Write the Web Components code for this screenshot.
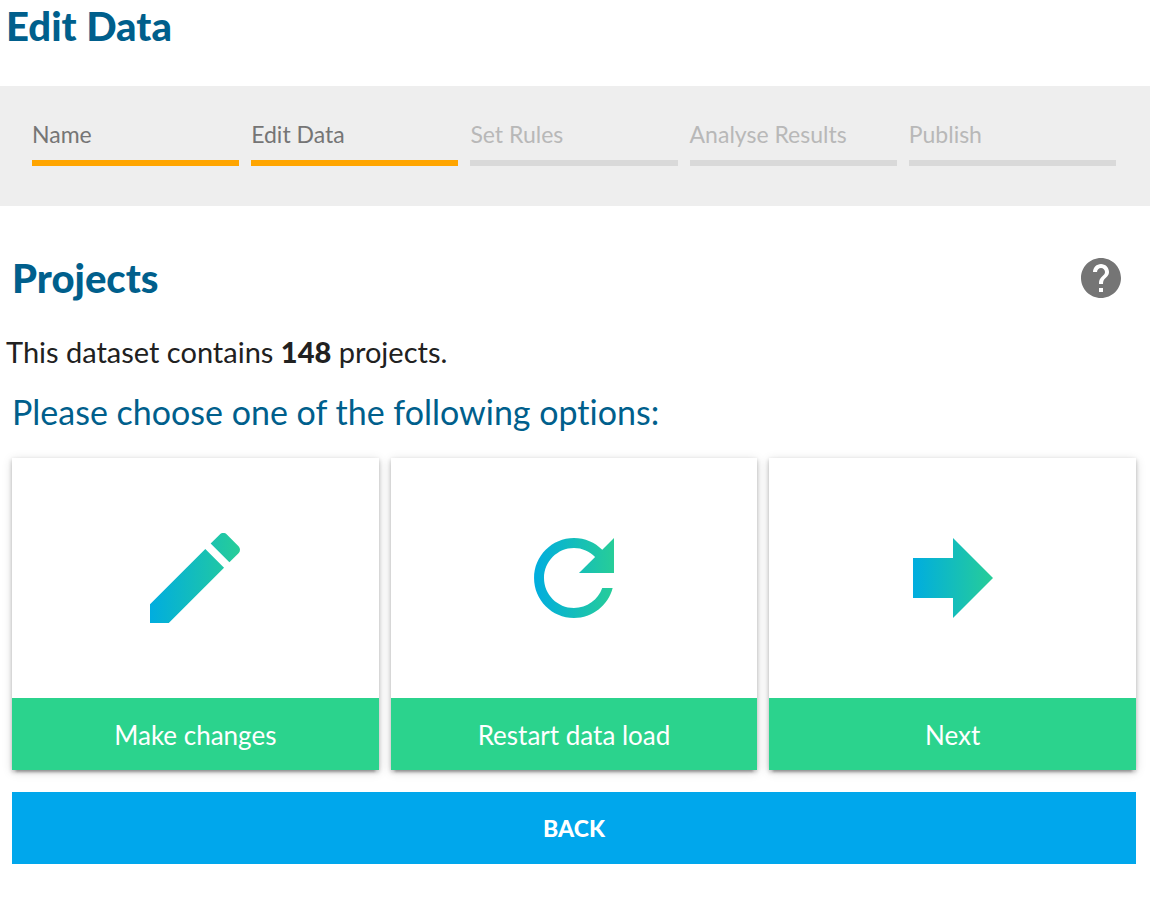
<!DOCTYPE html>
<html lang="en">
<head>
<meta charset="utf-8">
<meta name="viewport" content="width=device-width, initial-scale=1">
<title>Edit Data</title>
<style>
body { margin: 0; background: #fff; color: #212121; font-family: Lato, "Open Sans", sans-serif; font-variant-ligatures: none; }
</style>
</head>
<body>
<data-wizard></data-wizard>

<template id="wizard-template">
  <style>
    :host { display: block; --brand: #005f8c; }
    h1, h2, h3, p { margin: 0; }
    h1 { padding: 2px 6px 0; font-size: 40px; line-height: 48px; font-weight: 900; color: var(--brand); }
    wizard-steps { margin-top: 36px; }
    .title { display: flex; align-items: center; justify-content: space-between; padding: 48px 25px 0 12px; }
    h2 { font-size: 40px; line-height: 48px; font-weight: 900; color: var(--brand); }
    p { padding: 32px 6px 0; font-size: 29px; line-height: 36px; }
    p strong { font-weight: 900; }
    h3 { padding: 22px 12px 0; font-size: 34px; line-height: 40px; font-weight: 400; color: var(--brand); }
    .options { display: grid; grid-template-columns: repeat(3, 1fr); gap: 12px; padding: 26px 14px 22px 12px; }
    back-button { margin: 0 14px 44px 12px; }
  </style>
  <h1>Edit Data</h1>
  <wizard-steps>
    <wizard-step active>Name</wizard-step>
    <wizard-step active current>Edit Data</wizard-step>
    <wizard-step>Set Rules</wizard-step>
    <wizard-step>Analyse Results</wizard-step>
    <wizard-step>Publish</wizard-step>
  </wizard-steps>
  <main>
    <div class="title"><h2>Projects</h2><help-button></help-button></div>
    <p>This dataset contains <strong>148</strong> projects.</p>
    <h3>Please choose one of the following options:</h3>
    <div class="options">
      <option-card icon="edit">Make changes</option-card>
      <option-card icon="refresh">Restart data load</option-card>
      <option-card icon="forward">Next</option-card>
    </div>
    <back-button>BACK</back-button>
  </main>
</template>

<template id="steps-template">
  <style>
    :host { display: block; background: #eee; }
    nav { display: grid; grid-template-columns: repeat(5, 1fr); gap: 12px; padding: 32px 34px 40px 32px; }
  </style>
  <nav aria-label="Progress"><slot></slot></nav>
</template>

<template id="step-template">
  <style>
    :host { display: block; padding-bottom: 10px; border-bottom: 6px solid #d9d9d9; color: #b8b8b8; font-size: 23px; line-height: 32px; white-space: nowrap; }
    :host([active]) { border-color: #ffa500; color: #757575; }
  </style>
  <slot></slot>
</template>

<template id="help-template">
  <style>
    :host { display: block; }
    button { display: block; padding: 0; border: 0; background: none; color: #757575; cursor: pointer; }
    svg { display: block; width: 48px; height: 48px; fill: currentColor; }
  </style>
  <button type="button" aria-label="Help"><svg viewBox="0 0 24 24" aria-hidden="true"><path d="M12 2C6.48 2 2 6.48 2 12s4.480 10 10 10 10-4.480 10-10S17.520 2 12 2zm1 17h-2v-2h2v2zm2.070-7.750l-.9.920C13.450 12.900 13 13.500 13 15h-2v-.5c0-1.100.450-2.100 1.170-2.830l1.240-1.260c.370-.360.590-.860.590-1.410 0-1.100-.9-2-2-2s-2 .9-2 2H8c0-2.210 1.790-4 4-4s4 1.790 4 4c0 .880-.360 1.680-.930 2.250z"/></svg></button>
</template>

<template id="card-template">
  <style>
    :host { display: block; }
    button { display: block; width: 100%; padding: 0; border: 0; background: #fff; color: #fff; font: inherit; cursor: pointer; box-shadow: 0 2px 4px rgba(0,0,0,.24), 0 6px 2px -4px rgba(0,0,0,.2), 0 2px 10px rgba(0,0,0,.14); }
    svg { display: block; width: 120px; height: 120px; margin: 0 auto; padding: 60px 0; }
    span { display: block; background: #2bd38d; text-align: center; padding: 2px 0 0; font-size: 26px; line-height: 70px; }
  </style>
  <button type="button">
    <svg viewBox="0 0 24 24" aria-hidden="true">
      <defs><linearGradient id="fade"><stop offset="0" stop-color="#00addf"/><stop offset="1" stop-color="#27cd98"/></linearGradient></defs>
      <path fill="url(#fade)"/>
    </svg>
    <span><slot></slot></span>
  </button>
</template>

<template id="back-template">
  <style>
    :host { display: block; }
    button { display: block; width: 100%; padding: 0; border: 0; background: #00a7ec; color: #fff; font: inherit; font-size: 23px; font-weight: 900; line-height: 72px; cursor: pointer; }
  </style>
  <button type="button"><slot></slot></button>
</template>

<script>
const ICONS = {
  edit: 'M3 17.250V21h3.750L17.810 9.940l-3.750-3.750L3 17.250zM20.710 7.040c.390-.390.390-1.020 0-1.410l-2.340-2.340c-.390-.390-1.020-.390-1.410 0l-1.830 1.830 3.750 3.750 1.830-1.830z',
  refresh: 'M17.650 6.350C16.200 4.900 14.210 4 12 4c-4.420 0-7.990 3.580-7.990 8s3.570 8 7.990 8c3.730 0 6.840-2.550 7.730-6h-2.080c-.820 2.330-3.040 4-5.650 4-3.310 0-6-2.690-6-6s2.690-6 6-6c1.660 0 3.140.690 4.220 1.780L13 11h7V4l-2.350 2.350z',
  forward: 'M12 8V4l8 8-8 8v-4H4V8z'
};
class TemplateElement extends HTMLElement {
  constructor() {
    super();
    const template = document.getElementById(this.constructor.template);
    this.attachShadow({ mode: 'open' }).append(template.content.cloneNode(true));
  }
}
class WizardSteps extends TemplateElement { static template = 'steps-template'; }
class WizardStep extends TemplateElement {
  static template = 'step-template';
  connectedCallback() { if (this.hasAttribute('current')) this.setAttribute('aria-current', 'step'); }
}
class HelpButton extends TemplateElement { static template = 'help-template'; }
class OptionCard extends TemplateElement {
  static template = 'card-template';
  connectedCallback() { this.shadowRoot.querySelector('path').setAttribute('d', ICONS[this.getAttribute('icon')]); }
}
class BackButton extends TemplateElement { static template = 'back-template'; }
class DataWizard extends TemplateElement { static template = 'wizard-template'; }
customElements.define('wizard-steps', WizardSteps);
customElements.define('wizard-step', WizardStep);
customElements.define('help-button', HelpButton);
customElements.define('option-card', OptionCard);
customElements.define('back-button', BackButton);
customElements.define('data-wizard', DataWizard);
</script>
</body>
</html>
